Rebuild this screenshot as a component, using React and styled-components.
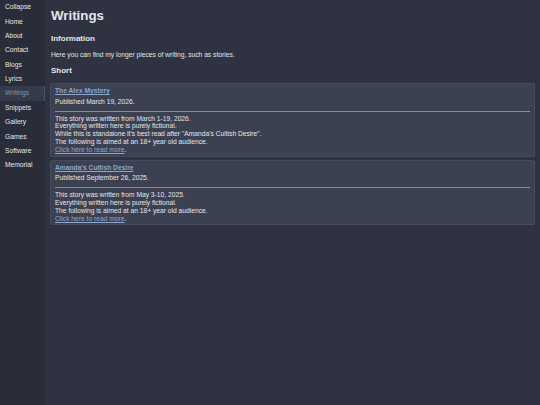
import React from "react";
import styled, { createGlobalStyle } from "styled-components";

const Global = createGlobalStyle`
  html, body { margin: 0; padding: 0; height: 100%; background: #2f3341; }
  #root { height: 100%; }
  body { font-family: "Liberation Sans", Arial, sans-serif; color: #e4e6eb; }
`;

const Layout = styled.div`
  display: flex;
  min-height: 405px;
  height: 100%;
`;

const Sidebar = styled.nav`
  width: 45px;
  flex-shrink: 0;
  background: #292d39;
  display: flex;
  flex-direction: column;
`;

const NavItem = styled.a`
  display: block;
  font-size: 6.7px;
  line-height: 8px;
  padding: 3.2px 5px 3.2px 5px;
  color: ${(p) => (p.$active ? "#8793aa" : "#e4e6eb")};
  background: ${(p) => (p.$active ? "#363b4b" : "transparent")};
  border-right: 1px solid ${(p) => (p.$active ? "#4d5468" : "transparent")};
  text-decoration: none;
  white-space: nowrap;
`;

const Main = styled.main`
  flex: 1;
  padding: 6px 5px 0 5px;
  display: flex;
  flex-direction: column;
`;

const Title = styled.h1`
  margin: 2px 0 0 1px;
  font-size: 13.3px;
  line-height: 16px;
  font-weight: bold;
  color: #e4e6eb;
`;

const Heading = styled.h2`
  margin: ${(p) => p.$mt || "8px"} 0 0 1px;
  font-size: 8px;
  line-height: 10px;
  font-weight: bold;
  color: #e4e6eb;
`;

const Para = styled.p`
  margin: 7px 0 0 1px;
  font-size: 6.7px;
  line-height: 8px;
`;

const Card = styled.section`
  margin-top: ${(p) => p.$mt};
  background: #3c4152;
  border: 1px solid #464b5d;
  border-radius: 2px;
  padding: 2px 4px 2px 4px;
  font-size: 6.7px;
  line-height: 7.8px;
`;

const CardLink = styled.a`
  display: inline-block;
  margin-top: 1px;
  font-weight: bold;
  color: #8ca6cc;
  text-decoration: underline;
`;

const Published = styled.div`
  margin-top: 3px;
`;

const Rule = styled.hr`
  border: none;
  border-top: 1px solid #8b90a0;
  margin: 5px 0 3px 0;
`;

const Line = styled.div``;

const ReadMore = styled.a`
  color: #8ca6cc;
  text-decoration: underline;
`;

const navItems = [
  "Collapse",
  "Home",
  "About",
  "Contact",
  "Blogs",
  "Lyrics",
  "Writings",
  "Snippets",
  "Gallery",
  "Games",
  "Software",
  "Memorial",
];

const stories = [
  {
    title: "The Alex Mystery",
    published: "Published March 19, 2026.",
    lines: [
      "This story was written from March 1-19, 2026.",
      "Everything written here is purely fictional.",
      "While this is standalone it's best read after \"Amanda's Cultish Desire\".",
      "The following is aimed at an 18+ year old audience.",
    ],
  },
  {
    title: "Amanda's Cultish Desire",
    published: "Published September 26, 2025.",
    lines: [
      "This story was written from May 3-10, 2025.",
      "Everything written here is purely fictional.",
      "The following is aimed at an 18+ year old audience.",
    ],
  },
];

export default function App() {
  return (
    <>
      <Global />
      <Layout>
        <Sidebar>
          {navItems.map((n) => (
            <NavItem key={n} $active={n === "Writings"}>
              {n}
            </NavItem>
          ))}
        </Sidebar>
        <Main>
          <Title>Writings</Title>
          <Heading $mt="10px">Information</Heading>
          <Para>Here you can find my longer pieces of writing, such as stories.</Para>
          <Heading $mt="7px">Short</Heading>
          {stories.map((s, i) => (
            <Card key={s.title} $mt={i === 0 ? "7px" : "3px"}>
              <CardLink>{s.title}</CardLink>
              <Published>{s.published}</Published>
              <Rule />
              {s.lines.map((l) => (
                <Line key={l}>{l}</Line>
              ))}
              <Line>
                <ReadMore>Click here to read more</ReadMore>.
              </Line>
            </Card>
          ))}
        </Main>
      </Layout>
    </>
  );
}
